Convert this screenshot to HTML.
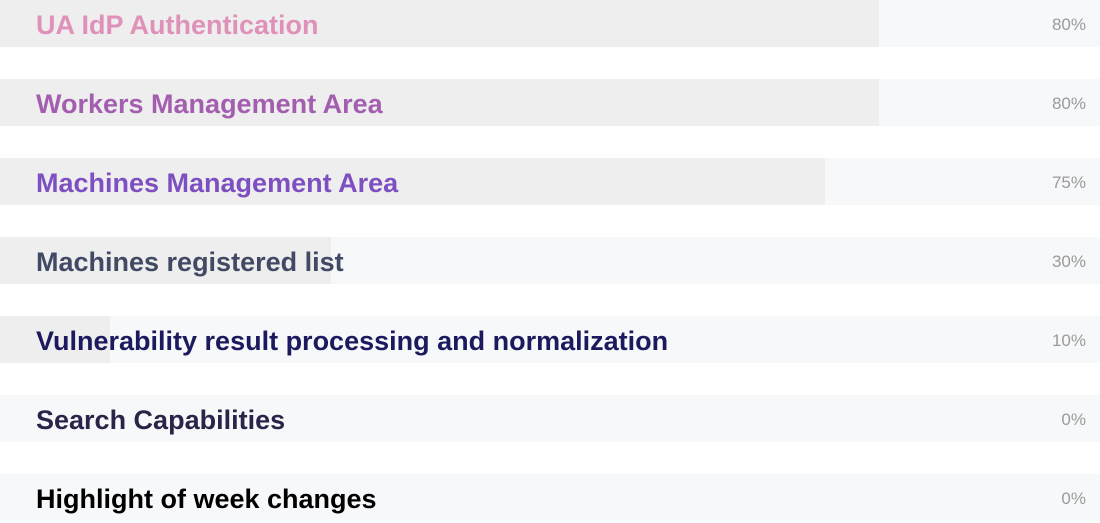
<!DOCTYPE html>
<html><head><style>
body{margin:0;width:1100px;height:521px;background:#fff;font-family:"Liberation Sans",sans-serif;overflow:hidden;position:relative}
.row{position:absolute;left:0;width:1100px;height:47px;background:#f7f8fa}
.bar{position:absolute;left:0;top:0;height:47px;background:#eeeeee}
.t{position:absolute;left:36px;top:1px;line-height:48px;font-size:27px;font-weight:bold;white-space:nowrap}
.p{position:absolute;right:14px;top:1px;line-height:48px;font-size:17px;color:#9a9a9a}
</style></head><body>
<div class="row" style="top:0"><div class="bar" style="width:879px"></div><div class="t" style="color:#e091b9">UA IdP Authentication</div><div class="p">80%</div></div>
<div class="row" style="top:79px"><div class="bar" style="width:879px"></div><div class="t" style="color:#a35eb0">Workers Management Area</div><div class="p">80%</div></div>
<div class="row" style="top:158px"><div class="bar" style="width:825px"></div><div class="t" style="color:#7d4fc0">Machines Management Area</div><div class="p">75%</div></div>
<div class="row" style="top:237px"><div class="bar" style="width:331px"></div><div class="t" style="color:#414964">Machines registered list</div><div class="p">30%</div></div>
<div class="row" style="top:316px"><div class="bar" style="width:110px"></div><div class="t" style="color:#1c1a5e">Vulnerability result processing and normalization</div><div class="p">10%</div></div>
<div class="row" style="top:395px"><div class="t" style="color:#2a2548">Search Capabilities</div><div class="p">0%</div></div>
<div class="row" style="top:474px"><div class="t" style="color:#000">Highlight of week changes</div><div class="p">0%</div></div>
</body></html>
